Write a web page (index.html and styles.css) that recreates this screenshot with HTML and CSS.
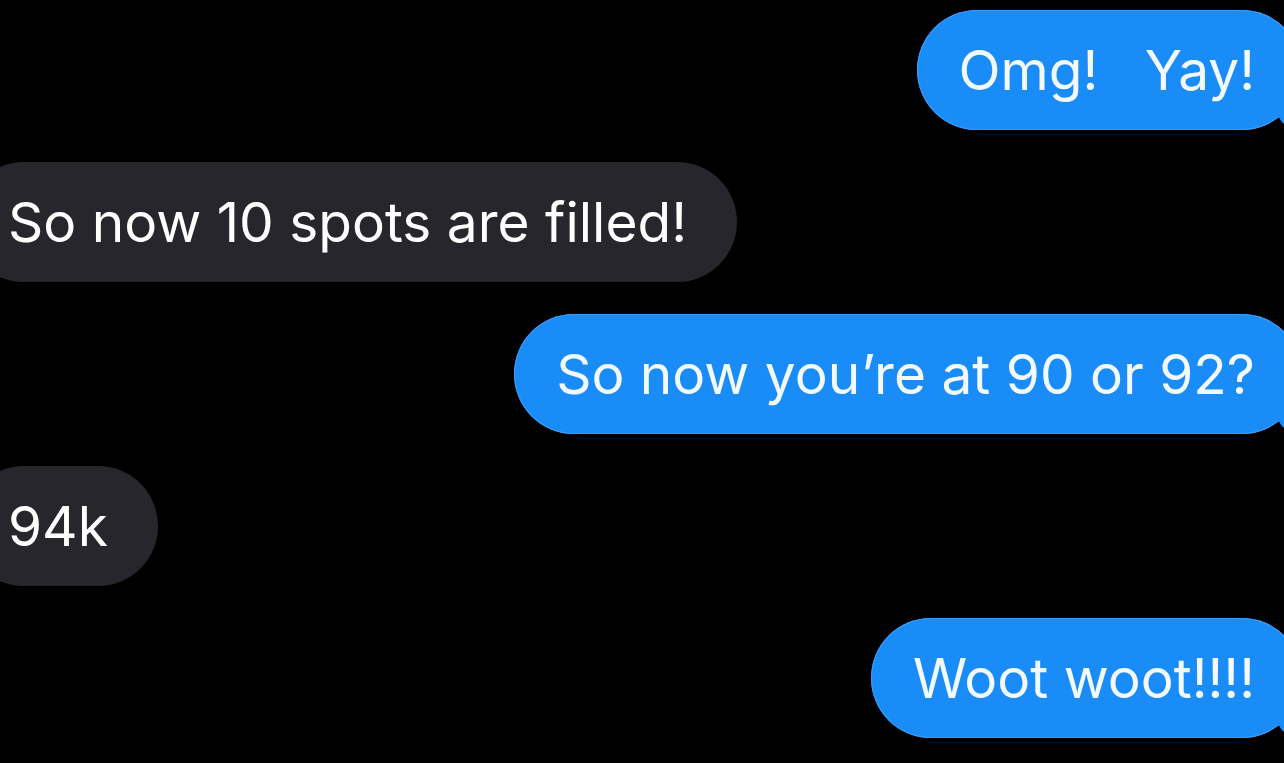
FILE: index.html
```html
<!DOCTYPE html>
<html lang="en">
<head>
  <meta charset="UTF-8" />
  <title>Messages</title>
  <meta name="viewport" content="width=device-width, initial-scale=1.0" />
  <link rel="stylesheet" href="styles.css">
</head>
<body>
  <div class="thread">
    <div class="row sent">
      <div class="bubble">Omg!&nbsp;&nbsp; Yay!</div>
    </div>
    <div class="row received">
      <div class="bubble">So now 10 spots are filled!</div>
    </div>
    <div class="row sent">
      <div class="bubble">So now you’re at 90 or 92?</div>
    </div>
    <div class="row received">
      <div class="bubble">94k</div>
    </div>
    <div class="row sent">
      <div class="bubble">Woot woot!!!!</div>
    </div>
  </div>
</body>
</html>
```

FILE: styles.css
```css
html, body { margin: 0; background: #000; }
body { width: 1284px; height: 763px; overflow: hidden; font-family: Inter, "Liberation Sans", Arial, sans-serif; }

.thread {
  display: flex;
  flex-direction: column;
  gap: 32px;
  padding-top: 10px;
}

.row { display: flex; }
.row.sent { justify-content: flex-end; margin-right: -18px; }
.row.received { justify-content: flex-start; margin-left: -36px; }

.bubble {
  position: relative;
  height: 120px;
  display: flex;
  align-items: center;
  border-radius: 60px;
  font-size: 55px;
  color: #fff;
  white-space: nowrap;
}

.sent .bubble {
  background: #1a8cf8;
  color: #f2f9ff;
  padding: 0 47px 0 42px;
  box-shadow: 0 0 0 1px #3a9ef8 inset;
}

.received .bubble {
  background: #26262c;
  padding: 0 50px 0 44px;
}

/* tails */
.sent .bubble::after {
  content: "";
  position: absolute;
  right: -6px;
  bottom: 0;
  width: 30px;
  height: 24px;
  background: #1a8cf8;
  border-bottom-left-radius: 24px 18px;
}

.received .bubble::after {
  content: "";
  position: absolute;
  left: -6px;
  bottom: 0;
  width: 30px;
  height: 24px;
  background: #26262c;
  border-bottom-right-radius: 24px 18px;
}
```
